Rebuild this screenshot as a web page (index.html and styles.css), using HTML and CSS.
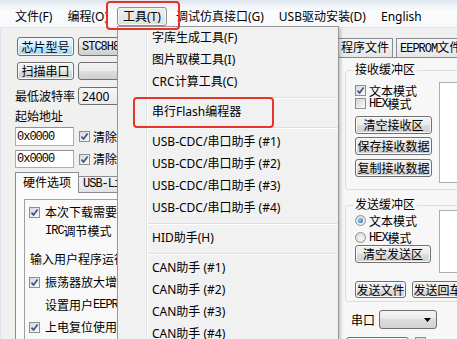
FILE: index.html
```html
<!DOCTYPE html>
<html>
<head>
<meta charset="utf-8">
<link rel="stylesheet" href="styles.css">
</head>
<body>
<div class="win">
  <div class="menubar">
    <span class="mi">文件(F)</span>
    <span class="mi">编程(O)</span>
    <span class="mi open">工具(T)</span>
    <span class="mi">调试仿真接口(G)</span>
    <span class="mi">USB驱动安装(D)</span>
    <span class="mi">English</span>
  </div>
  <div class="body">
    <div class="frame"></div>
    <div class="left">
      <div class="row r1"><div class="btn focus wl">芯片型号</div><div class="combo ss">STC8H8K64U</div></div>
      <div class="row r2"><div class="btn wl">扫描串口</div><div class="combo"></div></div>
      <div class="row r3"><span class="lbl">最低波特率</span><div class="combo">2400</div></div>
      <div class="cap">起始地址</div>
      <div class="row r5"><div class="field ss">0x0000</div><span class="cb"><svg viewBox="0 0 9 9" width="9" height="9"><path d="M1.5 4.6 L3.6 7 L7.6 1.6" fill="none" stroke="#3c4f8c" stroke-width="1.7"/></svg></span><span class="ctext">清除代码缓冲区</span></div>
      <div class="row r6"><div class="field ss">0x0000</div><span class="cb"><svg viewBox="0 0 9 9" width="9" height="9"><path d="M1.5 4.6 L3.6 7 L7.6 1.6" fill="none" stroke="#3c4f8c" stroke-width="1.7"/></svg></span><span class="ctext">清除EEPROM区</span></div>
      <div class="tabs"><span class="tab active">硬件选项</span><span class="tab ss">USB-Link1D</span></div>
      <div class="pane">
        <div class="inner">
          <div class="opt o1"><span class="cb"><svg viewBox="0 0 9 9" width="9" height="9"><path d="M1.5 4.6 L3.6 7 L7.6 1.6" fill="none" stroke="#3c4f8c" stroke-width="1.7"/></svg></span>本次下载需要修改硬件选项</div>
          <div class="opt o2 ind"><span class="ss">IRC</span>调节模式</div>
          <div class="opt o3 ind0">输入用户程序运行时的IRC频率</div>
          <div class="opt o4"><span class="cb"><svg viewBox="0 0 9 9" width="9" height="9"><path d="M1.5 4.6 L3.6 7 L7.6 1.6" fill="none" stroke="#3c4f8c" stroke-width="1.7"/></svg></span>振荡器放大增益</div>
          <div class="opt o5 ind">设置用户<span class="ss">EEPROM</span>大小</div>
          <div class="opt o6"><span class="cb"><svg viewBox="0 0 9 9" width="9" height="9"><path d="M1.5 4.6 L3.6 7 L7.6 1.6" fill="none" stroke="#3c4f8c" stroke-width="1.7"/></svg></span>上电复位使用较长延时</div>
        </div>
      </div>
    </div>
    <div class="right">
      <div class="rtabs"><span class="rtab">程序文件</span><span class="rtab"><span class="ss">EEPROM</span>文件</span></div>
      <div class="rpane">
        <div class="grp g1">
          <div class="gt">接收缓冲区</div>
          <div class="gbody">
            <div class="gcol">
              <div class="crow c1"><span class="cb"><svg viewBox="0 0 9 9" width="9" height="9"><path d="M1.5 4.6 L3.6 7 L7.6 1.6" fill="none" stroke="#3c4f8c" stroke-width="1.7"/></svg></span>文本模式</div>
              <div class="crow"><span class="cb off"></span><span class="ss">HEX</span>模式</div>
              <div class="btn rb b1">清空接收区</div>
              <div class="btn rb b2">保存接收数据</div>
              <div class="btn rb b3">复制接收数据</div>
            </div>
            <div class="ta ta1"></div>
          </div>
        </div>
        <div class="grp g2">
          <div class="gt">发送缓冲区</div>
          <div class="gbody">
            <div class="gcol">
              <div class="crow rr1"><span class="rd on"></span>文本模式</div>
              <div class="crow rr2"><span class="rd"></span><span class="ss">HEX</span>模式</div>
              <div class="btn rb b4">清空发送区</div>
            </div>
            <div class="ta ta2"></div>
          </div>
          <div class="brow"><div class="btn sb">发送文件</div><div class="btn sb">发送回车</div></div>
        </div>
        <div class="prow"><span>串口</span><div class="combo pc"><svg class="arr" viewBox="0 0 7 4" width="7" height="4"><path d="M0 0 H7 L3.5 4 Z" fill="#000"/></svg></div></div>
        <div class="lrow"><div class="btn lb"></div><span class="cb off"></span></div>
      </div>
    </div>
  </div>
  <div class="menu">
    <div class="mitem">字库生成工具(F)</div>
    <div class="mitem">图片取模工具(I)</div>
    <div class="mitem">CRC计算工具(C)</div>
    <div class="msep"></div>
    <div class="mitem">串行Flash编程器</div>
    <div class="msep"></div>
    <div class="mitem">USB-CDC/串口助手 (#1)</div>
    <div class="mitem">USB-CDC/串口助手 (#2)</div>
    <div class="mitem">USB-CDC/串口助手 (#3)</div>
    <div class="mitem">USB-CDC/串口助手 (#4)</div>
    <div class="msep"></div>
    <div class="mitem">HID助手(H)</div>
    <div class="msep"></div>
    <div class="mitem">CAN助手 (#1)</div>
    <div class="mitem">CAN助手 (#2)</div>
    <div class="mitem">CAN助手 (#3)</div>
    <div class="mitem">CAN助手 (#4)</div>
  </div>
  <div class="mark m1"></div>
  <div class="mark m2"></div>
</div>
</body>
</html>
```
FILE: styles.css
```css
* { box-sizing: border-box; }
html, body { margin: 0; padding: 0; }
body {
  width: 457px; height: 339px; overflow: hidden;
  font-family: "Noto Sans", "Noto Sans CJK SC", sans-serif;
  font-size: 12px; color: #000; background: #f0f0f0;
}
.win { position: relative; width: 457px; height: 339px; overflow: hidden; background: #f0f0f0; }
.ss { font-family: "Liberation Mono", "Noto Sans CJK SC", monospace; font-size: 12px; letter-spacing: -1px; }

/* menu bar */
.menubar {
  height: 28px; display: flex; align-items: flex-start; gap: 3px; padding-left: 9px;
  background: linear-gradient(#dde5ee 0, #edf1f6 5px, #fbfcfd 12px, #f7f8fa 100%);
  border-bottom: 1px solid #e3e7ec;
}
.mi { margin-top: 7px; height: 19px; line-height: 17px; padding: 0 5px; border: 1px solid transparent; border-radius: 3px; white-space: nowrap; }
.mi.open { border-color: #8e8f8f; background: linear-gradient(#eeeeee, #e0e0e0); box-shadow: inset 0 0 0 1px #f7f7f7; }

/* body */
.body { display: flex; height: 311px; }
.frame { width: 4px; background: #cbd9ea; border-right: 1px solid #dfe6ef; }
.left { width: 335px; padding-left: 14px; flex: none; }
.row { display: flex; align-items: center; }
.r1 { margin-top: 9px; height: 19px; }
.r2 { margin-top: 6px; height: 18px; }
.r3 { margin-top: 7px; height: 18px; }
.cap { margin-top: 5px; height: 14px; line-height: 14px; }
.r5 { margin-top: 3px; height: 19px; }
.r6 { margin-top: 4px; height: 18px; }

.btn {
  height: 100%; display: flex; align-items: center; justify-content: center; white-space: nowrap;
  border: 1px solid #707070; border-radius: 3px;
  background: linear-gradient(#f2f2f2 0%, #ebebeb 50%, #dddddd 50%, #cfcfcf 100%);
  box-shadow: inset 0 0 0 1px #fbfbfb;
}
.btn.focus {
  border-color: #3c7fb1;
  background: linear-gradient(#eaf6fd 0%, #d9f0fc 50%, #bee6fd 50%, #a7d9f5 100%);
  box-shadow: inset 0 0 0 1px #f4fbff;
}
.wl { width: 57px; margin-left: 2px; }
.combo {
  height: 100%; width: 150px; margin-left: 4px; padding-left: 3px; display: flex; align-items: center;
  border: 1px solid #707070; border-radius: 3px;
  background: linear-gradient(#f2f2f2 0%, #ebebeb 50%, #dddddd 50%, #cfcfcf 100%);
  white-space: nowrap; overflow: hidden;
}
.lbl { width: 59px; white-space: nowrap; }
.r3 .combo { margin-left: 4px; background: linear-gradient(#f6f6f6, #e9e9e9); }
.field {
  width: 59px; height: 100%; background: #fff; border: 1px solid #abadb3; border-top-color: #8e9196;
  padding-left: 1px; display: flex; align-items: center;
}
.cb {
  width: 11px; height: 11px; flex: none; margin-left: 5px; border: 1px solid #8e8f8f;
  background: linear-gradient(135deg, #d8d8d8, #fbfbfb); display: flex; align-items: center; justify-content: center;
}
.cb svg { display: block; }
.ctext { margin-left: 3px; white-space: nowrap; }

.tabs { margin-top: 4px; height: 20px; display: flex; align-items: flex-end; }
.tab {
  height: 16px; border: 1px solid #898c95; border-bottom: none; white-space: nowrap;
  background: linear-gradient(#f3f3f3, #e3e3e3); padding: 0 4px; line-height: 15px;
}
.tab.active { height: 21px; width: 64px; margin-bottom: -1px; position: relative; z-index: 1; background: #fbfbfb; line-height: 20px; padding-left: 7px; }
.tab.ss { margin-left: -1px; padding-left: 4px; }
.pane { width: 300px; height: 160px; border: 1px solid #898c95; background: #fbfbfb; padding: 6px 0 0 8px; }
.inner { width: 260px; height: 160px; border: 1px solid #a0a0a0; background: #f8f8f8; padding-left: 4px; }
.opt { height: 16px; display: flex; align-items: center; white-space: nowrap; }
.opt .cb { margin-left: 0; margin-right: 5px; }
.o1 { margin-top: 4px; }
.o2 { margin-top: 3px; }
.o3 { margin-top: 12px; }
.o4 { margin-top: 7px; }
.o5 { margin-top: 7px; }
.o6 { margin-top: 6px; }
.ind { padding-left: 16px; }
.ind0 { padding-left: 1px; }

/* right */
.right { flex: 1; }
.rtabs { display: flex; gap: 3px; margin-top: 10px; height: 19px; padding-left: 1px; }
.rtab {
  height: 19px; border: 1px solid #898c95; border-bottom: none; white-space: nowrap;
  background: linear-gradient(#f6f6f6, #e6e6e6); padding: 0 3px; line-height: 17px;
}
.rpane { margin-left: 1px; height: 300px; border-left: 1px solid #898c95; border-top: 1px solid #898c95; background: #f7f7f7; padding-left: 7px; }
.grp { width: 130px; border: 1px solid #d5dfe5; border-radius: 3px; padding-left: 9px; }
.g1 { margin-top: 12px; padding-bottom: 6px; }
.g2 { margin-top: 15px; padding-bottom: 3px; }
.gt { width: fit-content; margin: -8px 0 0 -2px; padding: 0 2px; height: 14px; line-height: 14px; background: #f7f7f7; white-space: nowrap; }
.gbody { display: flex; }
.gcol { width: 84px; flex: none; }
.crow { height: 13px; display: flex; align-items: center; white-space: nowrap; }
.crow .cb { margin-left: 0; margin-right: 3px; }
.cb.off { background: linear-gradient(135deg, #d6d6d6, #f9f9f9); }
.c1 { margin-top: 7px; }
.rb { height: 18px; width: 77px; }
.b1 { margin-top: 6px; }
.b2 { margin-top: 3px; }
.b3 { margin-top: 4px; }
.ta { width: 40px; background: #fff; border: 1px solid #abadb3; }
.ta1 { margin-top: 5px; height: 101px; }
.ta2 { margin-top: -2px; height: 63px; }
.rd {
  width: 11px; height: 11px; border-radius: 50%; border: 1px solid #8e8f8f; margin-right: 3px; flex: none;
  background: radial-gradient(circle at 60% 65%, #f8f8f8, #d4d4d4);
  display: flex; align-items: center; justify-content: center;
}
.rd.on::after { content: ""; width: 5px; height: 5px; border-radius: 50%; background: radial-gradient(circle at 40% 35%, #8fd0f4, #1c5d9c); }
.rr1 { margin-top: 2px; }
.rr2 { margin-top: 4px; }
.b4 { margin-top: 1px; width: 76px; }
.brow { display: flex; gap: 6px; margin-top: 8px; height: 17px; }
.sb { width: 51px; }
.prow { display: flex; align-items: center; height: 19px; margin-top: 8px; padding-left: 6px; }
.pc { width: 58px; margin-left: 4px; justify-content: flex-end; padding-right: 5px; background: linear-gradient(#f4f4f4 0%, #e8e8e8 50%, #dcdcdc 50%, #d2d2d2 100%); }
.arr { display: block; }
.lrow { display: flex; align-items: flex-start; margin-top: 8px; height: 18px; padding-left: 1px; }
.lb { width: 63px; }
.lrow .cb { margin-left: 6px; }

/* dropdown menu (overlay) */
.menu {
  position: absolute; left: 117px; top: 26px; width: 222px; height: 330px;
  border: 1px solid #979797;
  background: linear-gradient(to right, #f1f1f1 28px, #e2e3e3 28px, #e2e3e3 29px, #ffffff 29px, #ffffff 30px, #f1f1f1 30px);
  box-shadow: 2px 2px 3px rgba(0,0,0,0.2);
}
.mitem { height: 22px; line-height: 22px; padding-left: 34px; white-space: nowrap; }
.msep { height: 8px; margin-left: 30px; display: flex; align-items: center; }
.msep::before { content: ""; flex: 1; height: 1px; background: #e0e0e0; box-shadow: 0 1px 0 #ffffff; }

/* annotation boxes (overlay) */
.mark { position: absolute; border: 2.5px solid #e6342b; border-radius: 4px; }
.m1 { left: 106px; top: 1px; width: 74px; height: 29px; }
.m2 { left: 133px; top: 97px; width: 141px; height: 31px; }
```
